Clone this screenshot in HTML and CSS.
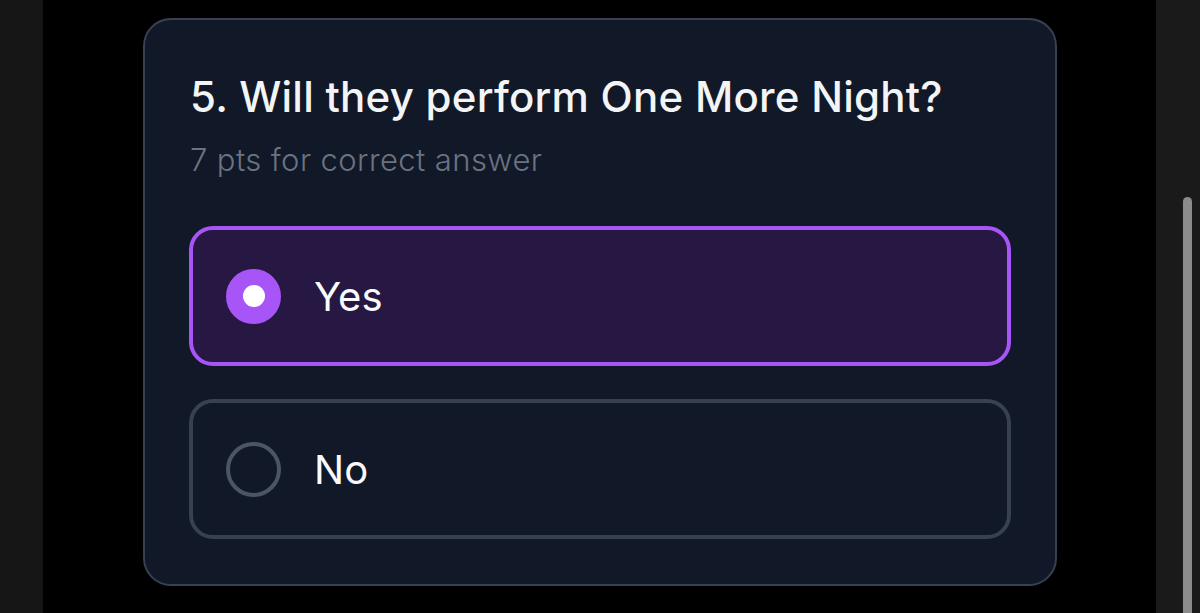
FILE: index.html
```html
<!DOCTYPE html>
<html lang="en">
<head>
<meta charset="utf-8">
<title>Question</title>
<link rel="stylesheet" href="styles.css">
</head>
<body>
<div class="frame">
  <div class="side-left"></div>
  <main class="stage">
    <section class="card">
      <h2 class="title">5. Will they perform One More Night?</h2>
      <p class="pts">7 pts for correct answer</p>
      <div class="options">
        <label class="option selected">
          <span class="radio checked"><span class="dot"></span></span>
          <span class="label">Yes</span>
        </label>
        <label class="option">
          <span class="radio"></span>
          <span class="label">No</span>
        </label>
      </div>
    </section>
  </main>
  <div class="side-right"><div class="thumb"></div></div>
</div>
</body>
</html>
```

FILE: styles.css
```css
* { box-sizing: border-box; }
html, body { margin: 0; padding: 0; height: 100%; background: #000; }
body { font-family: Inter, "Noto Sans", sans-serif; overflow: hidden; }

.frame { display: flex; height: 613px; width: 1200px; }
.side-left { width: 43px; background: #161616; flex: none; }
.stage { flex: 1; background: #000; padding: 18px 0 0 100px; }
.side-right { width: 44px; background: #1a1a1a; flex: none; position: relative; }
.thumb { position: absolute; left: 27px; top: 197px; width: 9px; height: 430px; border-radius: 5px; background: #8b8b8b; }

.card {
  width: 914px;
  height: 568px;
  background: #111827;
  border: 2px solid #384152;
  border-radius: 28px;
  padding: 0 44px;
}
.title {
  margin: 53px 0 0 1px;
  font-size: 42px;
  line-height: 48px;
  font-weight: 500;
  color: #f3f4f6;
  letter-spacing: 0.25px;
}
.pts {
  margin: 20px 0 0 1px;
  font-size: 31px;
  line-height: 38px;
  font-weight: 300;
  color: #6b7280;
  letter-spacing: 0.4px;
}
.options { display: flex; flex-direction: column; gap: 33px; margin-top: 47px; }
.option {
  display: flex;
  align-items: center;
  height: 140px;
  border: 4px solid #374151;
  border-radius: 24px;
  padding-left: 33px;
  gap: 33px;
}
.option.selected { border-color: #a855f7; background: #261842; }
.radio {
  width: 55px; height: 55px; border-radius: 50%;
  border: 4px solid #4b5563;
  display: flex; align-items: center; justify-content: center;
  flex: none;
}
.radio.checked { background: #a855f7; border-color: #a855f7; }
.dot { width: 22px; height: 22px; border-radius: 50%; background: #fff; }
.label { font-size: 40px; color: #f9fafb; font-weight: 400; }
```
